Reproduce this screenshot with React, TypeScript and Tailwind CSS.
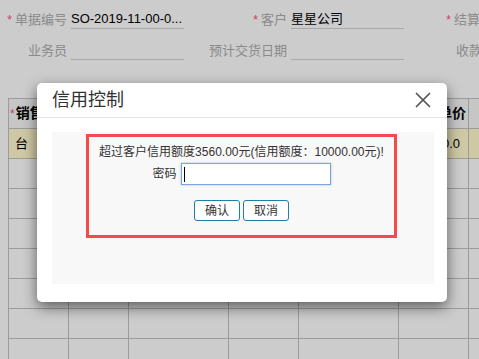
import { X } from "lucide-react";

const font = { fontFamily: '"Liberation Sans", "Noto Sans CJK SC", sans-serif' };

function Field({ label, value, required, labelW }: { label: string; value?: string; required?: boolean; labelW: string }) {
  return (
    <div className="flex items-end">
      <div className={`${labelW} flex justify-end items-end text-[13px] leading-[18px] text-[#8a8a8a]`}>
        {required && <span className="text-[#cf3b63] mr-[3px] text-[12px]">*</span>}
        {label}
      </div>
      <div className="ml-[4px] w-[113px] h-[19px] border-b border-[#a9a9a9] text-[13px] leading-[18px] text-black whitespace-nowrap overflow-hidden">
        {value}
      </div>
    </div>
  );
}

const cols = ["", "", "", "", "", "", ""];

export default function App() {
  return (
    <div className="relative w-[479px] h-[359px] overflow-hidden bg-[#cccccc]" style={font}>
      {/* form header, dimmed by the modal backdrop */}
      <div className="pt-[10px] flex flex-col gap-[12px]">
        <div className="flex">
          <Field labelW="w-[67px]" label="单据编号" value="SO-2019-11-00-0..." required />
          <Field labelW="w-[103px]" label="客户" value="星星公司" required />
          <Field labelW="w-[102px]" label="结算方式" required />
        </div>
        <div className="flex">
          <Field labelW="w-[67px]" label="业务员" />
          <Field labelW="w-[103px]" label="预计交货日期" />
          <Field labelW="w-[104px]" label="收款账户" />
        </div>
      </div>

      {/* detail grid */}
      <div className="mt-[38px] ml-[8px] border-t border-l border-[#9c9c9c] grid grid-cols-[60px_60px_100px_70px_100px_70px_100px] w-max">
        <div className="h-[30px] border-r border-b border-[#9c9c9c] bg-[#c6c6c6] flex items-center pl-[1px] text-[14px] font-bold text-black whitespace-nowrap overflow-hidden">
          <span className="text-[#cf3b63] text-[12px] font-normal mr-[1px]">*</span>销售
        </div>
        <div className="h-[30px] border-r border-b border-[#9c9c9c] bg-[#c6c6c6]" />
        <div className="h-[30px] border-r border-b border-[#9c9c9c] bg-[#c6c6c6]" />
        <div className="h-[30px] border-r border-b border-[#9c9c9c] bg-[#c6c6c6]" />
        <div className="h-[30px] border-r border-b border-[#9c9c9c] bg-[#c6c6c6]" />
        <div className="h-[30px] border-r border-b border-[#9c9c9c] bg-[#c6c6c6] flex items-center justify-end pr-[2px] text-[14px] font-bold text-black">
          单价
        </div>
        <div className="h-[30px] border-r border-b border-[#9c9c9c] bg-[#c6c6c6]" />

        <div className="h-[30px] border-r border-b border-[#9c9c9c] bg-[#cfc8a5] flex items-center pl-[6px] text-[13px] text-black">台</div>
        <div className="h-[30px] border-r border-b border-[#9c9c9c] bg-[#cfc8a5]" />
        <div className="h-[30px] border-r border-b border-[#9c9c9c] bg-[#cfc8a5]" />
        <div className="h-[30px] border-r border-b border-[#9c9c9c] bg-[#cfc8a5]" />
        <div className="h-[30px] border-r border-b border-[#9c9c9c] bg-[#cfc8a5]" />
        <div className="h-[30px] border-r border-b border-[#9c9c9c] bg-[#cfc8a5] flex items-center justify-end pr-[8px] text-[13px] text-black">100.0</div>
        <div className="h-[30px] border-r border-b border-[#9c9c9c] bg-[#cfc8a5]" />

        {Array.from({ length: 8 }).map((_, r) =>
          cols.map((_, c) => <div key={`${r}-${c}`} className="h-[30px] border-r border-b border-[#9c9c9c]" />)
        )}
      </div>

      {/* credit control dialog */}
      <div className="absolute left-[37px] top-[83px] w-[410px] h-[219px] bg-white rounded-[5px] shadow-[0_5px_14px_rgba(0,0,0,0.55)]">
        <div className="h-[35px] border-b border-[#e5e5e5] flex items-center justify-between pl-[15px] pr-[11px]">
          <span className="text-[18px] text-[#333] leading-none">信用控制</span>
          <X size={26} strokeWidth={1.6} className="text-[#555]" />
        </div>
        <div className="pt-[14px] pl-[15px]">
          <div className="w-[382px] h-[152px] bg-[#f8f8f8] pt-[2px] pl-[34px]">
            <div className="w-[311px] h-[104px] border-[3px] border-[#f44a4a] flex flex-col items-center pt-[6px]">
              <div className="text-[12px] leading-[18px] text-[#333] whitespace-nowrap">
                超过客户信用额度3560.00元(信用额度：10000.00元)!
              </div>
              <div className="mt-[2px] flex items-center gap-[4px]">
                <span className="text-[12px] text-[#333]">密码</span>
                <div className="w-[150px] h-[22px] bg-white border border-[#7aa3df] shadow-[0_0_2px_rgba(102,153,230,0.6)] flex items-center pl-[2px]">
                  <span className="w-[1px] h-[15px] bg-black" />
                </div>
              </div>
              <div className="mt-[15px] flex gap-[3px]">
                <button className="w-[46px] h-[21px] bg-white border border-[#1f7ea6] rounded-[3px] text-[12px] text-[#333] leading-none">
                  确认
                </button>
                <button className="w-[46px] h-[21px] bg-white border border-[#1f7ea6] rounded-[3px] text-[12px] text-[#333] leading-none">
                  取消
                </button>
              </div>
            </div>
          </div>
        </div>
      </div>
    </div>
  );
}
